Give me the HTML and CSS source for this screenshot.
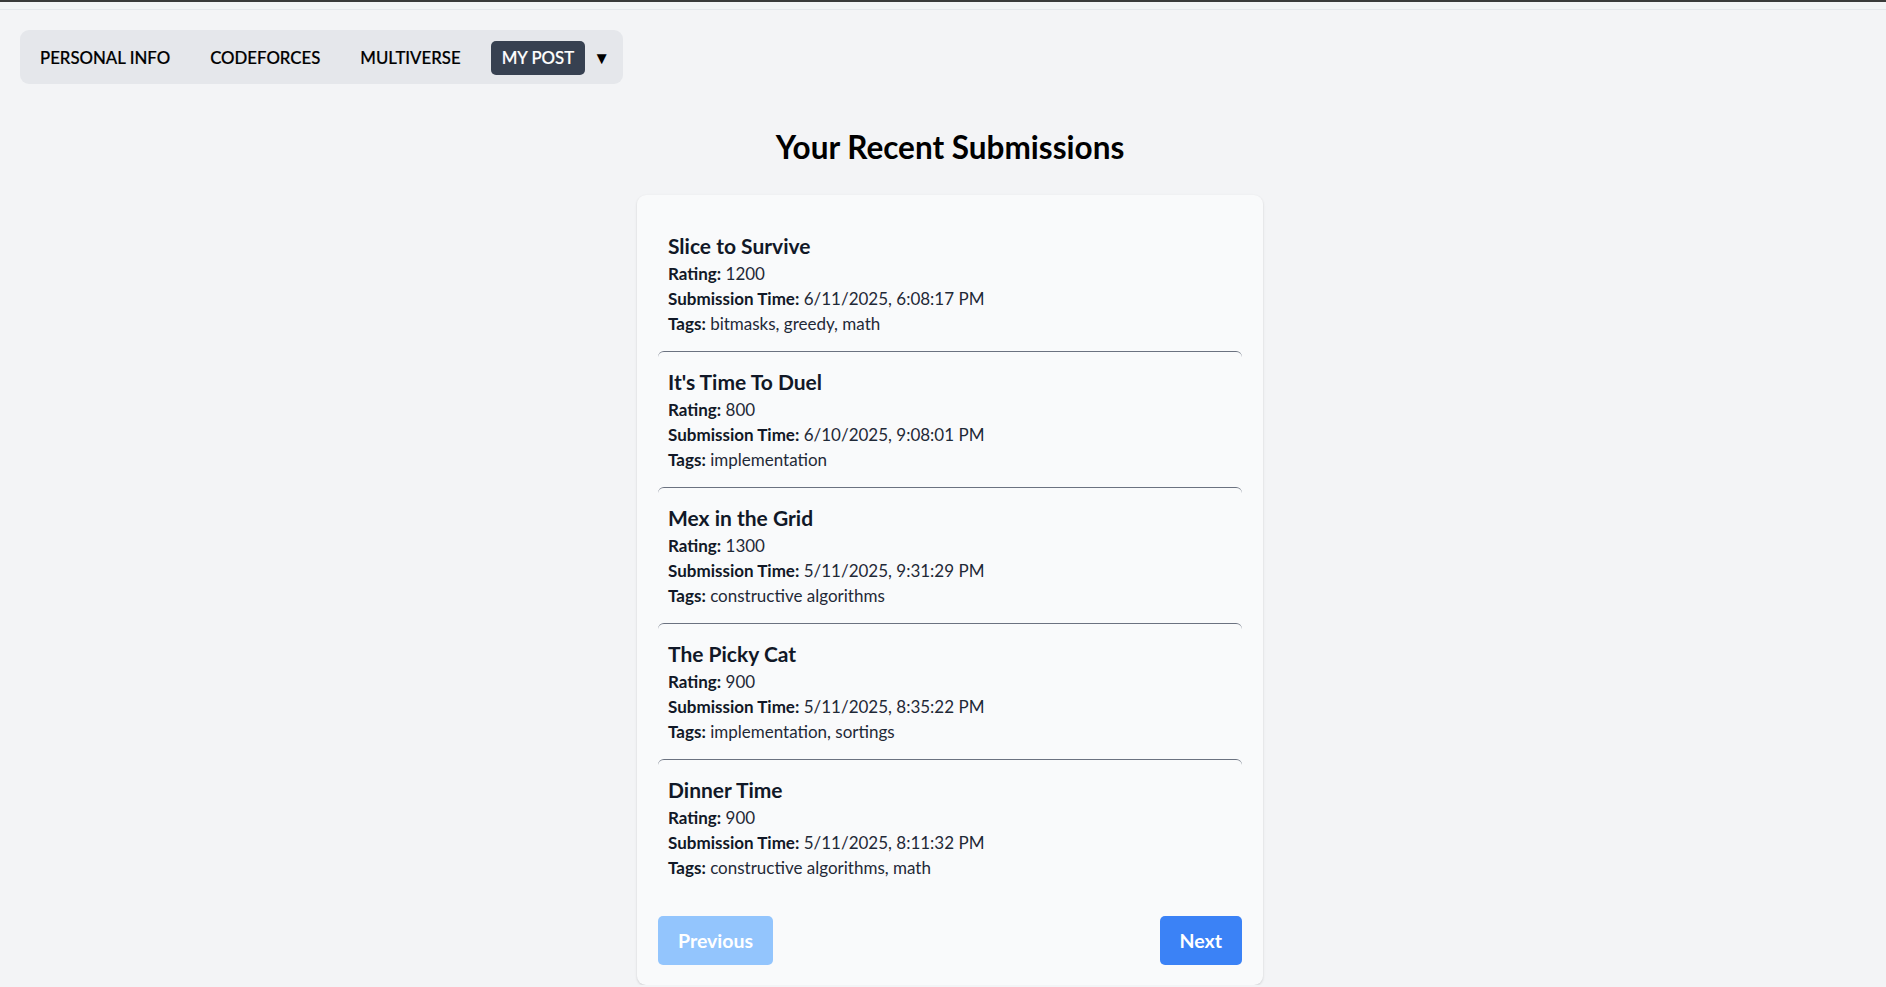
FILE: index.html
```html
<!DOCTYPE html>
<html lang="en">
<head>
<meta charset="utf-8">
<title>Your Recent Submissions</title>
<link rel="stylesheet" href="styles.css">
</head>
<body>
<div class="topbar"></div>
<nav class="nav">
  <a class="nav-link">PERSONAL INFO</a>
  <a class="nav-link">CODEFORCES</a>
  <a class="nav-link">MULTIVERSE</a>
  <div class="nav-group">
    <a class="nav-link active">MY POST</a>
    <span class="caret">&#9660;</span>
  </div>
</nav>
<main class="main">
  <h1 class="heading">Your Recent Submissions</h1>
  <section class="card">
    <div class="list">
      <div class="item">
        <h2 class="title">Slice to Survive</h2>
        <p class="line"><b>Rating:</b> 1200</p>
        <p class="line"><b>Submission Time:</b> 6/11/2025, 6:08:17 PM</p>
        <p class="line"><b>Tags:</b> bitmasks, greedy, math</p>
      </div>
      <div class="item">
        <h2 class="title">It's Time To Duel</h2>
        <p class="line"><b>Rating:</b> 800</p>
        <p class="line"><b>Submission Time:</b> 6/10/2025, 9:08:01 PM</p>
        <p class="line"><b>Tags:</b> implementation</p>
      </div>
      <div class="item">
        <h2 class="title">Mex in the Grid</h2>
        <p class="line"><b>Rating:</b> 1300</p>
        <p class="line"><b>Submission Time:</b> 5/11/2025, 9:31:29 PM</p>
        <p class="line"><b>Tags:</b> constructive algorithms</p>
      </div>
      <div class="item">
        <h2 class="title">The Picky Cat</h2>
        <p class="line"><b>Rating:</b> 900</p>
        <p class="line"><b>Submission Time:</b> 5/11/2025, 8:35:22 PM</p>
        <p class="line"><b>Tags:</b> implementation, sortings</p>
      </div>
      <div class="item">
        <h2 class="title">Dinner Time</h2>
        <p class="line"><b>Rating:</b> 900</p>
        <p class="line"><b>Submission Time:</b> 5/11/2025, 8:11:32 PM</p>
        <p class="line"><b>Tags:</b> constructive algorithms, math</p>
      </div>
    </div>
    <div class="pager">
      <button class="btn btn-disabled" disabled>Previous</button>
      <button class="btn btn-primary">Next</button>
    </div>
  </section>
</main>
</body>
</html>
```
FILE: styles.css
```css
* { box-sizing: border-box; }

html, body {
  margin: 0;
  padding: 0;
  background: #f3f4f6;
  font-family: "Lato", "Noto Sans", sans-serif;
  color: #111827;
}

.topbar {
  height: 10px;
  border-top: 2px solid #3a3a3a;
  border-bottom: 1px solid #e5e7eb;
}

.nav {
  display: inline-flex;
  align-items: center;
  gap: 20px;
  height: 54px;
  margin: 20px 0 0 20px;
  padding: 1px 13px 0 10px;
  background: #e5e7eb;
  border-radius: 9px;
}

.nav-link {
  font-size: 16.8px;
  font-weight: 500;
  color: #000;
  padding: 0 10px;
  line-height: 34px;
  cursor: pointer;
  -webkit-text-stroke: 0.2px #000;
}

.nav-group {
  display: flex;
  align-items: center;
  gap: 8px;
}

.nav-link.active {
  background: #374151;
  color: #fff;
  border-radius: 5px;
  padding: 0 11px;
  -webkit-text-stroke: 0.2px #fff;
}

.caret {
  font-size: 17px;
  color: #000;
  line-height: 1;
}

.main {
  display: flex;
  flex-direction: column;
  align-items: center;
  padding-left: 14px;
}

.heading {
  margin: 43px 0 28px;
  font-size: 31.5px;
  line-height: 40px;
  font-weight: 700;
  color: #000;
}

.card {
  width: 626px;
  padding: 21px 21px 20px;
  background: #f9fafb;
  border-radius: 9px;
  box-shadow: 0 1px 3px rgba(0, 0, 0, 0.1), 0 1px 2px rgba(0, 0, 0, 0.06);
}

.item {
  padding: 16px 10px 15px;
  border-radius: 6px;
}

.item + .item {
  border-top: 1px solid #6b7280;
}

.title {
  margin: 0 0 1px;
  font-size: 21px;
  line-height: 28px;
  font-weight: 700;
  color: #111827;
}

.line {
  margin: 0;
  font-size: 17px;
  line-height: 25px;
  color: #1f2937;
}

.line b {
  font-weight: 700;
  color: #111827;
}

.pager {
  display: flex;
  justify-content: space-between;
  margin-top: 21px;
}

.btn {
  height: 49px;
  padding: 0 20px;
  border: none;
  border-radius: 5px;
  font-family: inherit;
  font-size: 19.5px;
  font-weight: 700;
  color: #fff;
}

.btn-disabled {
  background: #93c5fd;
}

.btn-primary {
  background: #3b82f6;
  cursor: pointer;
}
```
